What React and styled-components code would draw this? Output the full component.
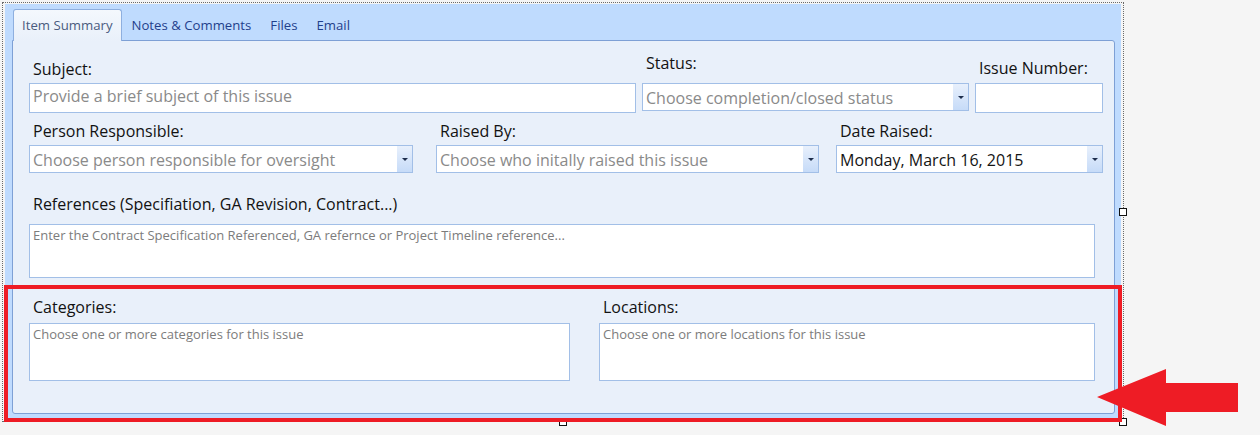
import React from 'react';
import styled, { createGlobalStyle } from 'styled-components';

const GlobalStyle = createGlobalStyle`
  html, body {
    margin: 0;
    padding: 0;
    background: #f5f5f5;
  }
  body {
    font-family: "Open Sans", "Noto Sans", sans-serif;
    color: #111;
  }
`;

const Surface = styled.div`
  position: relative;
  height: 435px;
  padding: 2px 0 0 2px;
  box-sizing: border-box;
  overflow: hidden;
`;

const Selection = styled.div`
  width: 1122px;
  box-sizing: border-box;
  border: 1px dotted #6a6a6a;
  padding: 1px 2px 1px 2px;
`;

const Frame = styled.div`
  background: #bfdbfe;
  padding: 5px 6px 6px 7px;
`;

const TabStrip = styled.div`
  display: flex;
  align-items: flex-end;
  height: 31px;
  padding-left: 1px;
`;

const Tab = styled.div`
  position: relative;
  z-index: ${(p) => (p.$active ? 1 : 0)};
  height: ${(p) => (p.$active ? 32 : 31)}px;
  margin-bottom: ${(p) => (p.$active ? -1 : 0)}px;
  box-sizing: border-box;
  display: flex;
  align-items: center;
  padding: 0 9px 1px 8px;
  font-size: 13.2px;
  color: ${(p) => (p.$active ? '#4a5b7e' : '#1f3f8c')};
  border: 1px solid ${(p) => (p.$active ? '#8eafdf' : 'transparent')};
  border-bottom: none;
  border-radius: 3px 3px 0 0;
  background: ${(p) => (p.$active ? 'linear-gradient(#f4f8fd, #e9f0fa)' : 'transparent')};
`;

const Panel = styled.div`
  background: #e9f0fa;
  border: 1px solid #7ea0d5;
  border-radius: 0 3px 3px 3px;
  padding: 18px 0 32px 16px;
`;

const Row = styled.div`
  display: flex;
  align-items: flex-start;
  margin-top: ${(p) => p.$top || 0}px;
`;

const Field = styled.div`
  display: flex;
  flex-direction: column;
  width: ${(p) => p.$w}px;
  margin-left: ${(p) => p.$ml || 0}px;
  flex-shrink: 0;
`;

const Label = styled.div`
  font-size: 16px;
  line-height: 20px;
  height: 20px;
  padding-left: 4px;
  white-space: nowrap;
  color: #121212;
  margin-top: ${(p) => p.$mt || 0}px;
  margin-bottom: ${(p) => (p.$mb == null ? 4 : p.$mb)}px;
`;

const TextBox = styled.div`
  box-sizing: border-box;
  height: ${(p) => p.$h}px;
  background: #fff;
  border: 1px solid #a2bfe7;
  padding: 2px 3px 0;
  font-size: 16px;
  line-height: 20px;
  color: #8a8a8a;
  white-space: nowrap;
  overflow: hidden;
`;

const SelectBox = styled.div`
  box-sizing: border-box;
  height: ${(p) => p.$h}px;
  display: flex;
  background: #fff;
  border: 1px solid #a2bfe7;
`;

const SelectText = styled.div`
  flex: 1;
  padding: 4px 3px 0;
  font-size: 16px;
  line-height: 20px;
  white-space: nowrap;
  overflow: hidden;
  color: ${(p) => (p.$value ? '#141414' : '#8a8a8a')};
`;

const DropButton = styled.div`
  width: 15px;
  flex-shrink: 0;
  display: flex;
  align-items: center;
  justify-content: center;
  background: linear-gradient(#e8f0fc, #c6dbf8);

  &::after {
    content: '';
    border-left: 3px solid transparent;
    border-right: 3px solid transparent;
    border-top: 3px solid #1d2d4c;
  }
`;

const Memo = styled.div`
  box-sizing: border-box;
  height: ${(p) => p.$h}px;
  background: #fff;
  border: 1px solid #a2bfe7;
  padding: 2px 3px 0;
  font-size: 13px;
  line-height: 17px;
  color: #7c7c7c;
  white-space: nowrap;
  overflow: hidden;
`;

const Highlight = styled.div`
  position: absolute;
  left: 4px;
  top: 285px;
  width: 1118px;
  height: 137px;
  box-sizing: border-box;
  border: 4px solid #ee1c25;
  pointer-events: none;
`;

const Handle = styled.div`
  position: absolute;
  left: ${(p) => p.$x - 4}px;
  top: ${(p) => p.$y - 4}px;
  width: 8px;
  height: 8px;
  box-sizing: border-box;
  background: #fff;
  border: 1px solid #111;
`;

const Arrow = styled.svg`
  position: absolute;
  left: 1090px;
  top: 360px;
`;

function Select({ w, ml, label, text, value, h = 28, labelProps }) {
  return (
    <Field $w={w} $ml={ml}>
      <Label {...labelProps}>{label}</Label>
      <SelectBox $h={h}>
        <SelectText $value={value}>{text}</SelectText>
        <DropButton />
      </SelectBox>
    </Field>
  );
}

export default function App() {
  return (
    <Surface>
      <GlobalStyle />
      <Selection>
        <Frame>
          <TabStrip>
            <Tab $active>Item Summary</Tab>
            <Tab>Notes &amp; Comments</Tab>
            <Tab>Files</Tab>
            <Tab>Email</Tab>
          </TabStrip>
          <Panel>
            <Row>
              <Field $w={607}>
                <Label>Subject:</Label>
                <TextBox $h={30}>Provide a brief subject of this issue</TextBox>
              </Field>
              <Select
                w={327}
                ml={6}
                label="Status:"
                text="Choose completion/closed status"
                labelProps={{ $mt: -6, $mb: 10 }}
              />
              <Field $w={128} $ml={6}>
                <Label $mt={-1} $mb={5}>Issue Number:</Label>
                <TextBox $h={30} />
              </Field>
            </Row>
            <Row $top={8}>
              <Select w={384} label="Person Responsible:" text="Choose person responsible for oversight" />
              <Select w={383} ml={23} label="Raised By:" text="Choose who initally raised this issue" />
              <Select w={267} ml={17} label="Date Raised:" text="Monday, March 16, 2015" value />
            </Row>
            <Row $top={21}>
              <Field $w={1066}>
                <Label $mb={10}>References (Specifiation, GA Revision, Contract...)</Label>
                <Memo $h={54}>
                  Enter the Contract Specification Referenced, GA refernce or Project Timeline reference...
                </Memo>
              </Field>
            </Row>
            <Row $top={19}>
              <Field $w={541}>
                <Label $mb={6}>Categories:</Label>
                <Memo $h={58}>Choose one or more categories for this issue</Memo>
              </Field>
              <Field $w={496} $ml={29}>
                <Label $mb={6}>Locations:</Label>
                <Memo $h={58}>Choose one or more locations for this issue</Memo>
              </Field>
            </Row>
          </Panel>
        </Frame>
      </Selection>
      <Handle $x={1123} $y={212} />
      <Handle $x={563} $y={422} />
      <Handle $x={1123} $y={422} />
      <Highlight />
      <Arrow width="160" height="75" viewBox="0 0 160 75">
        <polygon
          points="7,37 76,9 76,23 148,23 148,52 76,52 76,66"
          fill="#ee1c25"
        />
      </Arrow>
    </Surface>
  );
}
